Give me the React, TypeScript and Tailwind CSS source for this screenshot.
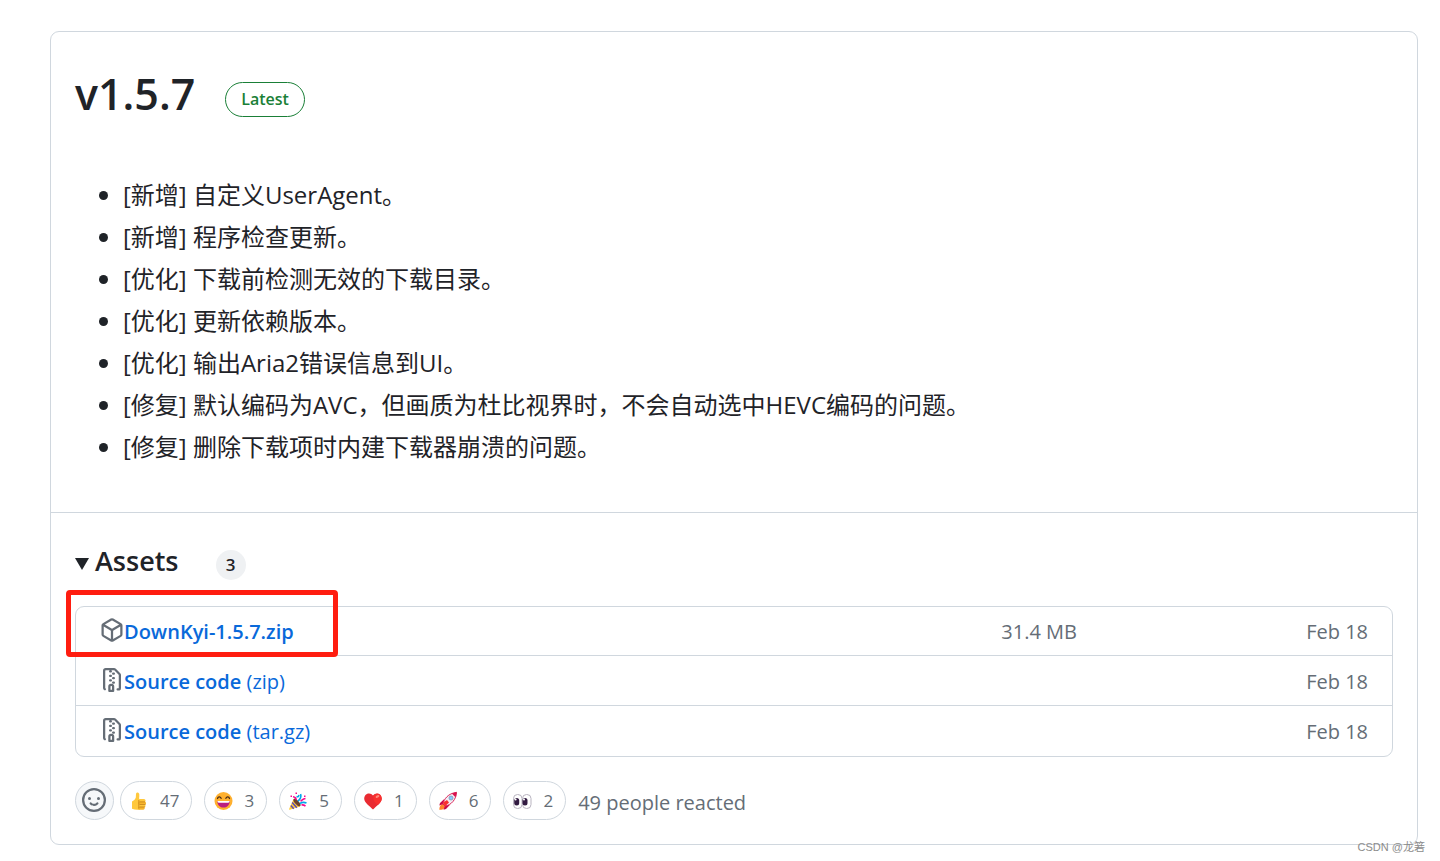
import type { ReactNode } from 'react';

interface Asset {
  name: string;
  suffix?: string;
  icon: 'package' | 'zip';
  size?: string;
  date: string;
}

interface Reaction {
  label: string;
  count: number;
  icon: ReactNode;
}

const PACKAGE_PATH =
  'm8.878.392 5.25 3.045c.54.314.872.89.872 1.514v6.098a1.75 1.75 0 0 1-.872 1.514l-5.25 3.045a1.75 1.75 0 0 1-1.756 0l-5.25-3.045A1.75 1.75 0 0 1 1 11.049V4.951c0-.624.332-1.201.872-1.514L7.122.392a1.75 1.75 0 0 1 1.756 0ZM7.875 1.69l-4.63 2.685L8 7.133l4.755-2.758-4.63-2.685a.248.248 0 0 0-.25 0ZM2.5 5.677v5.372c0 .09.047.171.125.216l4.625 2.683V8.432Zm6.25 8.271 4.625-2.683a.25.25 0 0 0 .125-.216V5.677L8.75 8.432Z';

const ZIP_PATH =
  'M3.5 1.75v11.5c0 .09.048.173.126.217a.75.75 0 0 1-.752 1.298A1.748 1.748 0 0 1 2 13.25V1.75C2 .784 2.784 0 3.75 0h5.586c.464 0 .909.185 1.237.513l2.914 2.914c.329.328.513.773.513 1.237v8.586A1.75 1.75 0 0 1 12.25 15h-.5a.75.75 0 0 1 0-1.5h.5a.25.25 0 0 0 .25-.25V4.664a.25.25 0 0 0-.073-.177L9.513 1.573a.25.25 0 0 0-.177-.073H7.25a.75.75 0 0 1 0 1.5h-.5a.75.75 0 0 1 0-1.5h-3a.25.25 0 0 0-.25.25Zm3.75 8.75h.5c.966 0 1.75.784 1.75 1.75v3a.75.75 0 0 1-.75.75h-2.5a.75.75 0 0 1-.75-.75v-3c0-.966.784-1.75 1.75-1.75ZM6 5.25a.75.75 0 0 1 .75-.75h.5a.75.75 0 0 1 0 1.5h-.5A.75.75 0 0 1 6 5.25Zm.75 2.25h.5a.75.75 0 0 1 0 1.5h-.5a.75.75 0 0 1 0-1.5ZM8 6.75A.75.75 0 0 1 8.75 6h.5a.75.75 0 0 1 0 1.5h-.5A.75.75 0 0 1 8 6.75ZM8.75 3h.5a.75.75 0 0 1 0 1.5h-.5a.75.75 0 0 1 0-1.5ZM8 9.75A.75.75 0 0 1 8.75 9h.5a.75.75 0 0 1 0 1.5h-.5A.75.75 0 0 1 8 9.75Zm-1 2.5v2.25h1v-2.25a.25.25 0 0 0-.25-.25h-.5a.25.25 0 0 0-.25.25Z';

const notes = [
  '[新增] 自定义UserAgent。',
  '[新增] 程序检查更新。',
  '[优化] 下载前检测无效的下载目录。',
  '[优化] 更新依赖版本。',
  '[优化] 输出Aria2错误信息到UI。',
  '[修复] 默认编码为AVC，但画质为杜比视界时，不会自动选中HEVC编码的问题。',
  '[修复] 删除下载项时内建下载器崩溃的问题。',
];

const assets: Asset[] = [
  { name: 'DownKyi-1.5.7.zip', icon: 'package', size: '31.4 MB', date: 'Feb 18' },
  { name: 'Source code', suffix: '(zip)', icon: 'zip', date: 'Feb 18' },
  { name: 'Source code', suffix: '(tar.gz)', icon: 'zip', date: 'Feb 18' },
];

const reactions: Reaction[] = [
  {
    label: 'thumbs up',
    count: 47,
    icon: (
      <>
        <path d="M2 9.500C3.600 9 5.300 7.500 5.800 5.600 6 4 5.800 2.500 6.200 1.200 6.600 0 9 .2 9.300 2.300c.2 1.500-.1 2.700-.2 4.200l1 1.500v9.500c-2.600.6-5.600.3-8.100-.7z" fill="#ffc83d" />
        <rect x="8.500" y="7" width="7" height="3.200" rx="1.500" fill="#ffc83d" />
        <rect x="8" y="9.600" width="8" height="3.200" rx="1.500" fill="#f7b52c" />
        <rect x="8" y="12.200" width="7.500" height="3.200" rx="1.500" fill="#ffc83d" />
        <rect x="8" y="14.800" width="6.500" height="3" rx="1.500" fill="#f7b52c" />
        <path d="M15 9.900H9.500M15.500 12.500H9.500M15 15H9.500M8.800 8v8.500" stroke="#c48119" strokeWidth=".8" fill="none" />
      </>
    ),
  },
  {
    label: 'laugh',
    count: 3,
    icon: (
      <>
        <circle cx="9.500" cy="9" r="9" fill="#ffb02e" />
        <path d="M3.500 6.500c.6-2 2.800-2 3.600-.2M11.900 6.300c.8-1.800 3-1.800 3.600.2" stroke="#4a2b16" strokeWidth="1.300" fill="none" strokeLinecap="round" />
        <path d="M3.300 9h12.400c0 4-2.500 6.600-6.200 6.600S3.300 13 3.300 9z" fill="#bb1d80" />
        <path d="M3.500 9h12c0 1.300-.5 1.700-1.200 1.700H4.700C4 10.700 3.500 10.300 3.500 9z" fill="#fff" />
      </>
    ),
  },
  {
    label: 'hooray',
    count: 5,
    icon: (
      <>
        <path d="M4.500 7 11 14.500.8 17.800c-.6.2-.9-.1-.7-.7z" fill="#ffcd3c" />
        <path d="M3.200 10.500l4.600 5.200M1.800 13.500l2.900 3.200" stroke="#5c4bb5" strokeWidth="1.500" />
        <ellipse cx="8" cy="10.500" rx="2" ry="4.800" transform="rotate(-42 8 10.500)" fill="#6b432e" />
        <path d="M9 9c2-1.500 3.500-4 2.600-7M11 11.500c2-1.300 4-1.500 6.500-.4M7.500 4.500c1 .5 2 .5 2.500-1.500" stroke="#00a6ed" strokeWidth="1.600" fill="none" />
        <path d="M7 8C7.500 6.500 6 5 4 4.800M11.500 9c1.500-.5 2-2 5-2.500M12.500 13c1.500-.3 2.500 0 4 1.200" stroke="#f70a8d" strokeWidth="1.600" fill="none" />
        <path d="M1.500 3.500H3V5H1.500zM6.500.5H8V2H6.500zM15 3.500h1.500V5H15z" fill="#f70a8d" />
      </>
    ),
  },
  {
    label: 'heart',
    count: 1,
    icon: (
      <>
        <path d="M9 3.500C6.500-.2.3 1.200.2 6.500.1 10.500 5.500 14 9 17.500c3.500-3.500 8.900-7 8.800-11C17.700 1.200 11.500-.2 9 3.500z" fill="#e92b32" />
        <path d="M9.500 3.800C8.800 8 11 12 14.500 12.500c2-2 3.300-4 3.200-6-.2-4.500-5-6.500-8.200-2.700z" fill="#f8312f" />
        <ellipse cx="13.500" cy="4.500" rx="2" ry="1.200" transform="rotate(-30 13.500 4.500)" fill="#ff8b7e" />
      </>
    ),
  },
  {
    label: 'rocket',
    count: 6,
    icon: (
      <>
        <path d="M3.500 11.500 7 15c-1.500 2-4 2.800-6.700 2.800C.2 15 1.500 12.800 3.500 11.500z" fill="#ff822d" />
        <path d="M5 7.200 1 11l-.7 2.500L5 11.700zM10.800 13l-3.800 4-2.500.7L6.300 13z" fill="#ca0b4a" />
        <path d="M4 12c1-5 5-10.500 13.500-11.700C17.500 7 12 13.500 6 14z" fill="#f1eef5" stroke="#dc2458" strokeWidth="1" />
        <path d="M12.800 1.500 17.700.2l-1.200 5z" fill="#d9124d" />
        <path d="m4 10.500 4-2.500 2 2.500-4 4z" fill="#f8312f" />
        <circle cx="12" cy="6" r="2" fill="#83cbff" stroke="#7f8fa8" strokeWidth=".7" />
      </>
    ),
  },
  {
    label: 'eyes',
    count: 2,
    icon: (
      <>
        <rect x=".5" y="2.500" width="8.500" height="14" rx="4" fill="#fff" stroke="#b9b4c0" />
        <rect x="9.500" y="2.500" width="8.500" height="14" rx="4" fill="#fff" stroke="#b9b4c0" />
        <rect x="1.200" y="6" width="5" height="7.500" rx="2.500" fill="#321b41" />
        <rect x="9.500" y="6" width="5" height="7.500" rx="2.500" fill="#321b41" />
        <circle cx="2.600" cy="7.600" r="1" fill="#fff" />
        <circle cx="11" cy="7.600" r="1" fill="#fff" />
      </>
    ),
  },
];

function AssetRow({ asset }: { asset: Asset }) {
  return (
    <li className="flex h-[50px] items-center border-b border-[#d0d7de] px-6 pt-0.5 text-xl text-[#656d76] first:h-[49px] last:border-b-0">
      <div className="flex flex-1 items-center">
        <svg viewBox="0 0 16 16" className="mb-1 h-6 w-6 shrink-0" fill="currentColor" aria-hidden="true">
          <path d={asset.icon === 'package' ? PACKAGE_PATH : ZIP_PATH} />
        </svg>
        <a href="#download" className="text-[#0969da]">
          <span className="font-semibold">{asset.name}</span>
          {asset.suffix && <span> {asset.suffix}</span>}
        </a>
      </div>
      <span>{asset.size}</span>
      <span className="w-[291px] text-right">{asset.date}</span>
    </li>
  );
}

function ReactionButton({ reaction }: { reaction: Reaction }) {
  return (
    <button
      aria-label={`${reaction.label} ${reaction.count}`}
      className="flex h-[39px] items-center gap-3 rounded-full border border-[#d0d7de] pr-3 pl-[9px] pt-px text-[17px] text-[#656d76]"
    >
      <svg viewBox="0 0 18 18" className="h-[18px] w-[18px] overflow-visible" aria-hidden="true">
        {reaction.icon}
      </svg>
      {reaction.count}
    </button>
  );
}

export default function App() {
  return (
    <div className="relative bg-white pt-[31px] pr-[22px] pb-4 pl-[50px] font-['Open_Sans','Noto_Sans_CJK_SC',sans-serif] text-[#1f2328]">
      <section className="rounded-[9px] border border-[#d0d7de]">
        <div className="px-6 pt-[26px] pb-[47px]">
          <header className="flex items-center gap-[30px]">
            <h1 className="text-[43px] leading-[72px] font-semibold">v1.5.7</h1>
            <span className="mt-2.5 rounded-full border border-[#1a7f37] px-[15px] text-base leading-[33px] font-semibold text-[#1a7f37]">
              Latest
            </span>
          </header>

          <ul className="mt-[47px] flex list-disc flex-col gap-1.5 pl-12 text-2xl leading-9">
            {notes.map((note) => (
              <li key={note}>{note}</li>
            ))}
          </ul>
        </div>

        <div className="border-t border-[#d0d7de] px-6 pt-7 pb-6">
          <details open>
            <summary className="flex cursor-pointer list-none items-center">
              <svg viewBox="0 0 14 12" className="mt-1.5 mr-1.5 h-3 w-3.5" aria-hidden="true">
                <path d="M0 0h14L7 12z" fill="currentColor" />
              </svg>
              <span className="text-[27px] leading-10 font-semibold">Assets</span>
              <span className="mt-2 ml-[37px] h-[30px] min-w-[30px] rounded-full bg-[#eff1f3] text-center text-[17px] leading-[30px] font-semibold">
                3
              </span>
            </summary>

            <div className="relative mt-[25px]">
              <ul className="rounded-[9px] border border-[#d0d7de]">
                {assets.map((asset) => (
                  <AssetRow key={asset.name + asset.icon + asset.suffix} asset={asset} />
                ))}
              </ul>
              {/* Highlight around the download to pick */}
              <div className="pointer-events-none absolute -top-4 -left-[9px] h-[67px] w-[272px] rounded-[4px] border-5 border-[#ff1d10]" />
            </div>
          </details>

          <div className="mt-6 flex items-center">
            <button
              aria-label="Add your reaction"
              className="mr-1.5 flex h-[39px] w-[39px] items-center justify-center rounded-full border border-[#d0d7de] bg-[#f6f8fa] pr-px pb-px text-[#656d76]"
            >
              <svg viewBox="0 0 16 16" className="h-6 w-6" fill="currentColor" aria-hidden="true">
                <path d="M8 0a8 8 0 1 1 0 16A8 8 0 0 1 8 0ZM1.5 8a6.5 6.5 0 1 0 13 0 6.5 6.5 0 0 0-13 0Zm3.82 1.636a.75.75 0 0 1 1.038.175l.007.009c.103.118.22.222.35.31.264.178.683.37 1.285.37.602 0 1.02-.192 1.285-.371.13-.088.247-.192.35-.31l.007-.008a.75.75 0 0 1 1.222.87l-.014.019a2.066 2.066 0 0 1-.184.213c-.16.166-.338.316-.53.445-.63.418-1.37.638-2.127.629-.946 0-1.652-.308-2.126-.63a3.331 3.331 0 0 1-.715-.657l-.014-.02a.75.75 0 0 1 .183-1.044ZM12 7a1 1 0 1 1-2 0 1 1 0 0 1 2 0ZM5 8a1 1 0 1 1 0-2 1 1 0 0 1 0 2Z" />
              </svg>
            </button>
            <div className="mr-3 flex gap-3">
              {reactions.map((reaction) => (
                <ReactionButton key={reaction.label} reaction={reaction} />
              ))}
            </div>
            <span className="mt-1 text-xl text-[#656d76]">49 people reacted</span>
          </div>
        </div>
      </section>
      <span className="absolute right-[15px] bottom-1.5 font-['Liberation_Sans','Noto_Sans_CJK_SC',sans-serif] text-[11px] leading-4 text-[#8c8c8c]">
        CSDN @龙箬
      </span>
    </div>
  );
}
